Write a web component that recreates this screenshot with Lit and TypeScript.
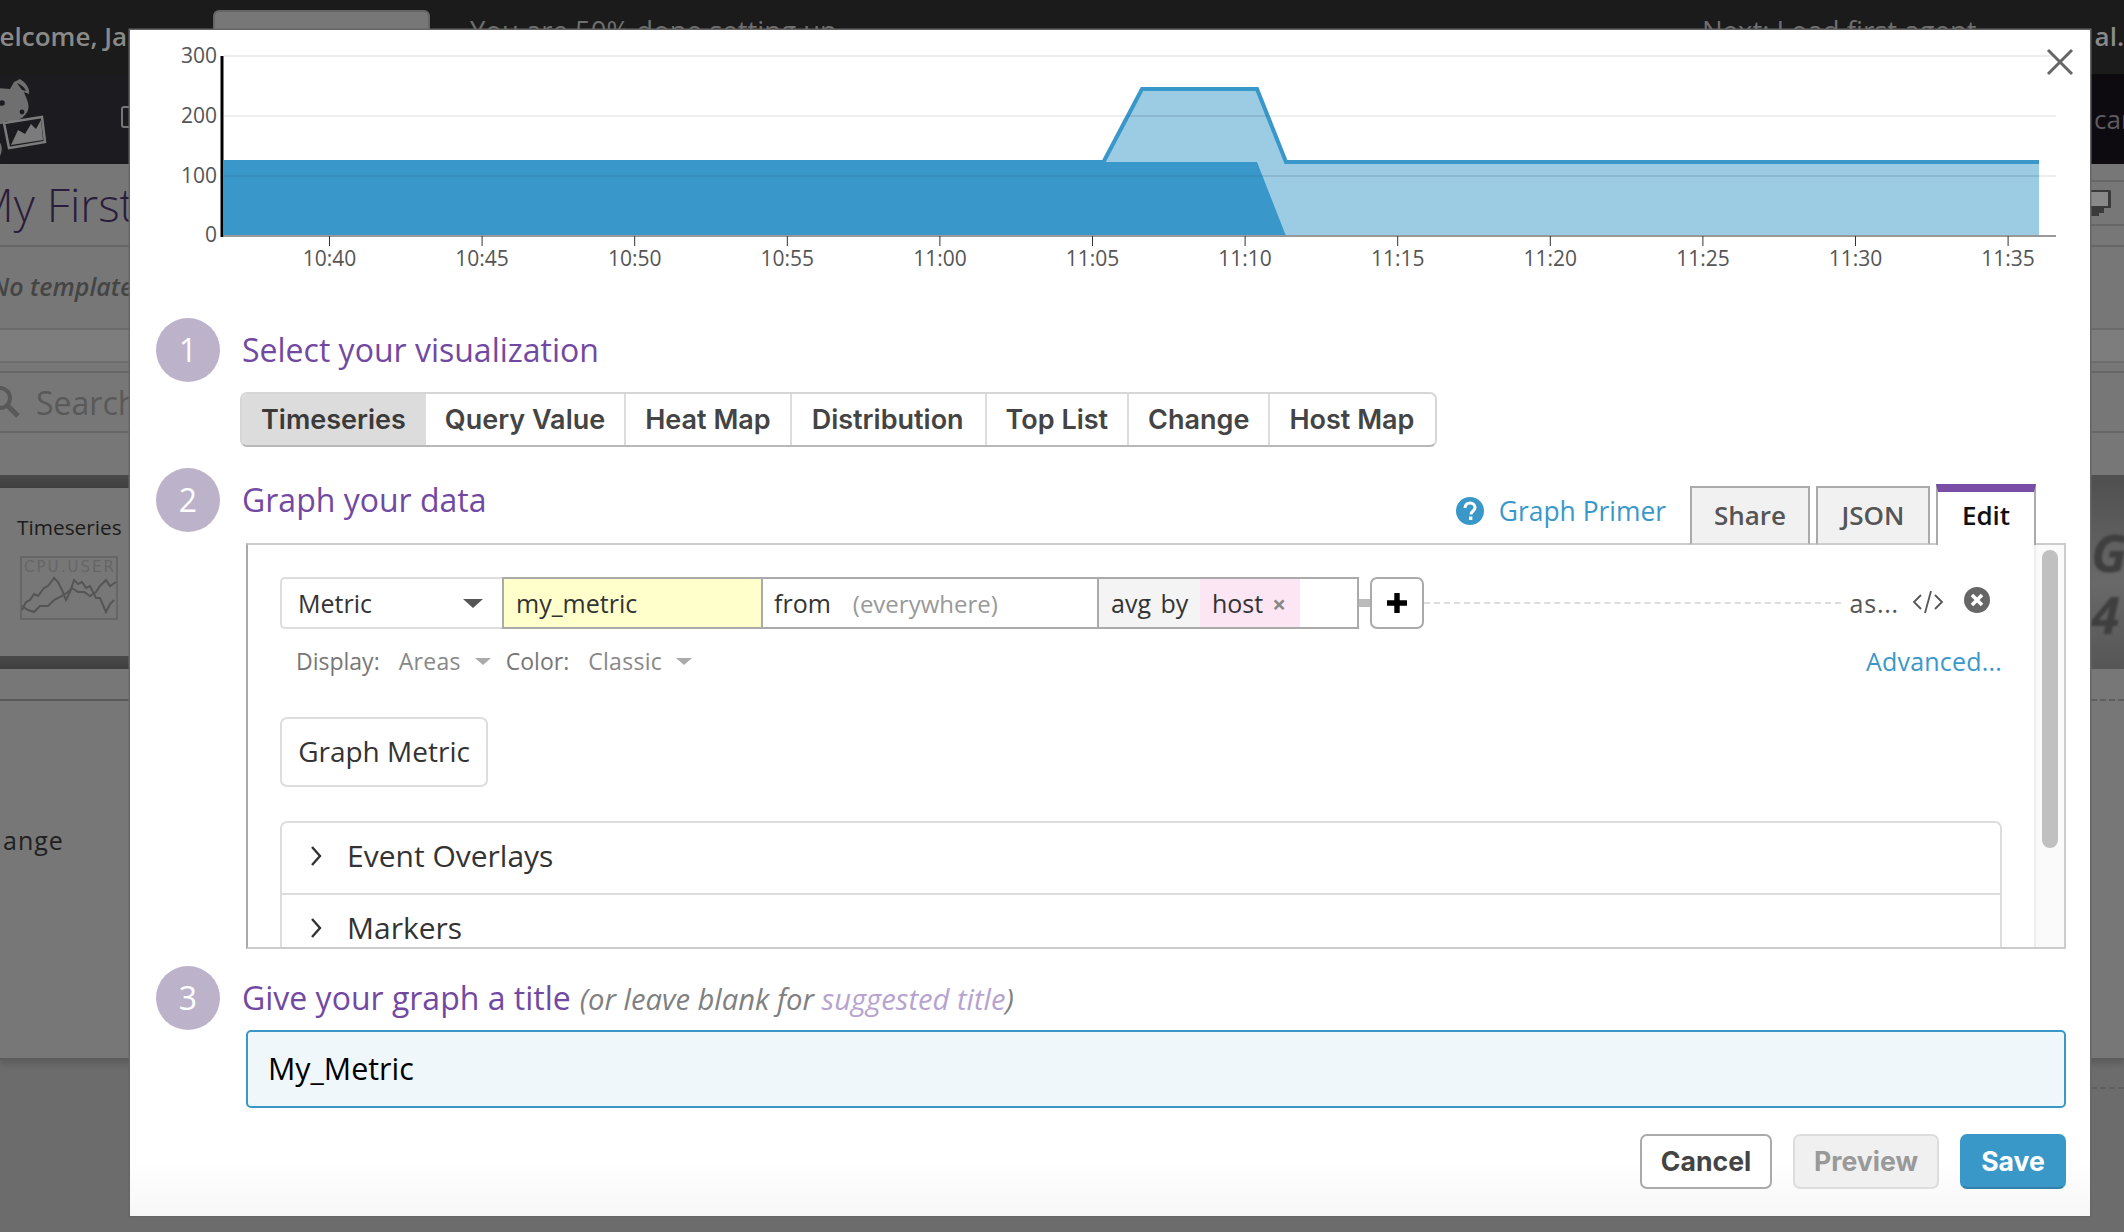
import { LitElement, html, css, svg } from "lit";
import { customElement } from "lit/decorators.js";

const TICKS = ["10:40", "10:45", "10:50", "10:55", "11:00", "11:05", "11:10", "11:15", "11:20", "11:25", "11:30", "11:35"];
const VIZ = ["Timeseries", "Query Value", "Heat Map", "Distribution", "Top List", "Change", "Host Map"];

@customElement("app-root")
export class AppRoot extends LitElement {
  static styles = css`
    :host { display: block; font-family: "Open Sans", "Liberation Sans", sans-serif; }
    * { box-sizing: border-box; }
    .page { position: relative; height: 1232px; overflow: hidden; background: #6c6c6c; color: #333; }

    /* dimmed page behind the dialog */
    .topbar { height: 74px; background: #1b1b1b; color: #8a8a8a; display: flex; font-size: 26px; font-weight: 600; }
    .welcome { margin: 18px 0 0 -25px; width: 238px; white-space: nowrap; }
    .started { margin-top: 10px; width: 217px; height: 40px; background: #777; border: 2px solid #666; border-radius: 6px; }
    .done { margin: 12px 0 0 40px; font-weight: 400; color: #6f6f6f; font-size: 27.5px; white-space: nowrap; }
    .next { margin: 12px 0 0 865px; font-weight: 400; color: #6f6f6f; font-size: 27.5px; white-space: nowrap; width: 20px; }
    .tail { margin: 18px 0 0 auto; }
    .nav { height: 90px; background: #1c1b20; display: flex; align-items: center; justify-content: space-between; }
    .nav svg { display: block; }
    .nav-right { width: 33px; height: 90px; background: #0d0b10; color: #5f5a60; font-size: 26px; line-height: 90px; padding-left: 3px; white-space: nowrap; overflow: hidden; }
    .nav-left { display: flex; align-items: flex-start; gap: 73px; }
    .nav-tile { margin-top: 32px; width: 12px; height: 22px; border: 2px solid #777; border-radius: 3px; }
    .content { height: 896px; background: #777; border-bottom: 2px solid #5c5c5c; box-shadow: 0 4px 6px rgba(0,0,0,.15); }
    .title { height: 83px; border-bottom: 2px solid #666; display: flex; justify-content: space-between; align-items: flex-end; overflow: hidden; }
    .title h1 { margin: 0 0 10px -26px; font-size: 46px; line-height: 62px; font-weight: 300; color: #2a1d3c; white-space: nowrap; }
    .title-side { width: 33px; height: 46px; margin-bottom: 19px; border-top: 2px solid #666; border-bottom: 2px solid #666; display: flex; align-items: center; }
    .tvars { height: 81px; padding-top: 22px; font-size: 25px; font-style: italic; font-weight: 600; color: #454545; margin-left: -9px; white-space: nowrap; }
    .strip { height: 33px; background: #7d7d7d; border-top: 2px solid #6a6a6a; }
    .searchwrap { height: 114px; padding-top: 8px; border-top: 2px solid #6c6c6c; }
    .search { height: 62px; display: flex; align-items: center; gap: 14px; border-top: 2px solid #666; border-bottom: 2px solid #666; color: #595959; font-size: 32px; }
    .search svg { margin-left: -14px; }
    .band { height: 13px; background: linear-gradient(#4a4a4a, #3f3f3f); }
    .panels { display: flex; height: 194px; }
    .panels-left { flex: 1; }
    .panels-main { height: 168px; padding: 26px 0 0 17px; }
    .panels-main .label { font-size: 20.8px; color: #1c1c1c; line-height: 26px; }
    .panels-main svg { display: block; margin: 16px 0 0 3px; }
    .bignum { width: 33px; background: linear-gradient(#4f4f4f, #696969 55%, #565656); overflow: hidden; padding-top: 46px; }
    .bignum span { display: block; color: #3f3f3f; font-size: 52px; font-weight: 700; line-height: 62px; font-style: italic; filter: blur(1px); }
    .lower { height: 32px; display: flex; }
    .lower div { flex: 1; border-bottom: 2px solid #5a5a5a; }
    .lower .dashes, .below .dashes { flex: none; width: 33px; height: 32px; border-bottom: 2px dashed #5f5f5f; background: #777; }
    .ange { margin: 123px 0 0 3px; font-size: 25px; letter-spacing: 1px; color: #202020; line-height: 32px; }
    .below { display: flex; justify-content: flex-end; margin-top: -3px; }
    .below .dashes { background: none; }

    /* dialog */
    .modal { position: absolute; left: 130px; top: 30px; width: 1960px; height: 1186px; background: linear-gradient(#fff 1130px, #f7f7f7); box-shadow: 0 0 0 1.5px #666; }
    .chart { display: block; width: 1960px; height: 288px; }
    .chart text { font-family: "Open Sans", sans-serif; font-size: 21px; fill: #555; }
    .close { position: absolute; right: 16px; top: 18px; }
    .body { padding: 0 24px 0 26px; }
    .step { display: flex; gap: 22px; height: 64px; }
    .num { flex: none; width: 64px; height: 64px; border-radius: 50%; background: #bcb2ca; color: #fff; font-size: 32px; line-height: 64px; text-align: center; }
    h2 { margin: 0; font-size: 32px; line-height: 64px; font-weight: 400; color: #7249a2; white-space: nowrap; }
    .note { font-size: 29.2px; font-style: italic; font-weight: 500; color: #808080; margin-left: 9px; }
    .note em { color: #b6a3d0; }

    .viz { display: flex; width: fit-content; margin: 10px 0 0 84px; height: 55px; border: 2px solid #d6d6d6; border-bottom-color: #b8b8b8; border-radius: 7px; overflow: hidden; }
    .viz div { padding: 0 19px; border-left: 2px solid #ddd; font: 600 27px/51px Inter, sans-serif; color: #444; white-space: nowrap; }
    .viz div:first-child { border-left: 0; padding-right: 18px; background: #dcdcdc; color: #3a3a3a; }
    .viz div:nth-child(4) { padding: 0 21px 0 20px; }
    .viz div:last-child { padding-right: 21px; }

    .step.two { margin-top: 21px; height: 75px; }
    .right { margin: 0 30px -2px auto; align-self: flex-end; display: flex; align-items: flex-end; position: relative; z-index: 1; }
    .primer { display: flex; align-items: center; gap: 15px; font-size: 26.4px; color: #3a98c9; margin: 0 24px 16px 0; white-space: nowrap; }
    .tab { height: 59px; margin-right: 6px; background: #f1f1f1; border: 2px solid #aaa; border-bottom: 2px solid #ccc; font: 600 26px/54px "Open Sans", sans-serif; color: #555; text-align: center; }
    .tab.share { width: 120px; }
    .tab.json { width: 114px; }
    .tab.edit { width: 100px; height: 61px; margin: 0; background: #fff; border-top: 8px solid #7a4ea6; border-bottom: 0; color: #111; line-height: 46px; }

    .panel { margin-left: 90px; height: 406px; border: 2px solid #ccc; border-left-color: #aaa; display: flex; overflow: hidden; }
    .inner { flex: 1; min-width: 0; padding: 32px 32px 0 32px; overflow: hidden; }
    .track { width: 30px; flex: none; background: #fafafa; border-left: 2px solid #eee; padding: 5px 0 0 6px; }
    .thumb { width: 16px; height: 298px; border-radius: 8px; background: #c0c0c0; }

    .query { display: flex; align-items: stretch; height: 52px; font-size: 25px; color: #333; }
    .select { width: 222px; border: 2px solid #ddd; border-right: 0; border-radius: 5px 0 0 5px; display: flex; align-items: center; justify-content: space-between; padding: 0 19px 0 16px; }
    .caret { width: 0; height: 0; border: 10px solid transparent; border-top: 9px solid #555; border-bottom: 0; }
    .box { width: 857px; flex: none; border: 2px solid #aaa; display: flex; }
    .box > div { display: flex; align-items: center; white-space: nowrap; }
    .metric { width: 259px; background: #ffc; padding-left: 12px; border-right: 2px solid #aaa; }
    .from { width: 336px; padding-left: 11px; gap: 22px; border-right: 2px solid #aaa; }
    .from span { color: #999; font-size: 24px; }
    .avg { width: 101px; padding-left: 12px; background: #f4f4f4; word-spacing: 3px; }
    .host { width: 100px; padding-left: 12px; gap: 9px; background: #fde6f3; }
    .host span { color: #888; font-weight: 700; font-size: 24px; }
    .link { width: 11px; height: 8px; align-self: center; background: #bbb; }
    .plus { width: 54px; flex: none; border: 2px solid #aaa; border-radius: 7px; display: flex; align-items: center; justify-content: center; }
    .dash { flex: 1; align-self: center; margin: 0 8px 0 0; border-top: 2px dashed #ddd; }
    .as { display: flex; align-items: center; gap: 13px; padding-right: 12px; color: #555; letter-spacing: .8px; white-space: nowrap; }
    .as svg { margin-bottom: 3px; }
    .as svg:last-child { margin: 0 0 6px 7px; }

    .display { display: flex; height: 32px; margin-top: 16px; align-items: center; font-size: 23px; color: #777; padding-left: 16px; white-space: nowrap; }
    .display .val { color: #888; margin-left: 19px; letter-spacing: .3px; }
    .display .caret { border-width: 8px; border-top: 7px solid #aaa; border-bottom: 0; margin: 0 15px 0 14px; }
    .adv { margin-left: auto; color: #3a98c9; font-size: 25px; letter-spacing: .2px; }

    .gm { margin-top: 40px; width: 208px; height: 70px; border: 2px solid #ddd; border-radius: 7px; font-size: 28px; line-height: 64px; text-align: center; color: #333; }
    .acc { margin-top: 34px; border: 2px solid #ddd; border-bottom: 0; border-radius: 7px 7px 0 0; }
    .acc-row { height: 72px; display: flex; align-items: center; gap: 25px; padding: 0 0 5px 28px; font-size: 30px; color: #333; border-bottom: 2px solid #ddd; }

    .step.three { margin-top: 17px; }
    .input { margin-left: 90px; height: 78px; background: #eff7fb; border: 2px solid #3a98c9; border-radius: 5px; padding-left: 20px; font-size: 30.4px; line-height: 74px; color: #000; }
    .actions { display: flex; justify-content: flex-end; gap: 21px; margin-top: 26px; }
    .btn { height: 55px; border-radius: 7px; border: 2px solid #aaa; background: #fff; font: 700 26.6px/50px Inter, sans-serif; color: #444; text-align: center; }
    .btn.cancel { width: 132px; }
    .btn.preview { width: 146px; background: #f0f0f0; border-color: #ddd; color: #999; }
    .btn.save { width: 106px; background: #3a98c9; border-color: #3a98c9; border-bottom-color: #2f7fa9; color: #fff; }
  `;

  private renderChart() {
    return html`<svg class="chart" viewBox="130 30 1960 288">
      ${[56, 116, 176].map((y) => svg`<line x1="224" x2="2056" y1=${y} y2=${y} stroke="#eee" stroke-width="2"></line>`)}
      ${[[300, 63], [200, 123], [100, 183], [0, 242]].map(([v, y]) => svg`<text x="217" y=${y} text-anchor="end">${v}</text>`)}
      <polygon points="1104,162 1142,90 1257,90 1286,164 2039,164 2039,236 1104,236" fill="#3997ca" fill-opacity=".5"></polygon>
      <polygon points="224,160 1104,160 1106,162 1257,162 1286,236 224,236" fill="#3997ca"></polygon>
      <polyline points="1104,161 1142,89 1257,89 1286,162 2039,162" fill="none" stroke="#3997ca" stroke-width="4"></polyline>
      <line x1="224" x2="2039" y1="176" y2="176" stroke="#000" stroke-opacity=".06" stroke-width="2"></line>
      <line x1="1127" x2="1268" y1="116" y2="116" stroke="#000" stroke-opacity=".06" stroke-width="2"></line>
      <line x1="224" x2="2056" y1="236" y2="236" stroke="#999" stroke-width="2"></line>
      <line x1="222" x2="222" y1="56" y2="237" stroke="#000" stroke-width="3"></line>
      ${TICKS.map((t, i) => {
        const x = 329.5 + i * 152.6;
        return svg`<line x1=${x} x2=${x} y1="236" y2="246" stroke="#333" stroke-width="1"></line>
          <text x=${x} y="266" text-anchor="middle">${t}</text>`;
      })}
    </svg>`;
  }

  private renderBackdrop() {
    return html`
      <div class="topbar">
        <div class="welcome">Welcome, Jane</div>
        <div class="started"></div>
        <div class="done">You are 50% done setting up</div>
        <div class="next">Next: Load first agent</div>
        <div class="tail">al.</div>
      </div>
      <div class="nav">
        <div class="nav-left">
          <svg width="48" height="90" viewBox="0 0 48 90">
            <path d="M-4 14 L10 15 L14 8 L20 5 C26 9 30 14 29 20 L24 18 C26 24 30 30 28 36 C26 42 20 46 14 47 L6 47 L2 50 L-4 50 Z" fill="#6f6f6f"></path>
            <path d="M17 9 C22 11 25 14 26 17 L22 16 Z" fill="#1c1b20"></path>
            <circle cx="2" cy="29" r="2.8" fill="#1c1b20"></circle><circle cx="22" cy="38" r="2.4" fill="#1c1b20"></circle>
            <path d="M-2 66 C2 70 3 76 0 82 L-2 82 Z" fill="#6f6f6f"></path>
            <path d="M4 49 L42 43 L45 68 L9 74 Z" fill="#1c1b20" stroke="#7b7b7b" stroke-width="2.5"></path>
            <path d="M11 71 L18 56 L25 60 L31 50 L36 55 L41 46 L43 66 Z" fill="#7b7b7b"></path>
          </svg>
          <div class="nav-tile"></div>
        </div>
        <div class="nav-right">car</div>
      </div>
      <div class="content">
        <div class="title">
          <h1>My First Dashboard</h1>
          <div class="title-side">
            <svg width="20" height="28" viewBox="0 0 20 28"><path d="M0 1 H19 Q20 1 20 3 V19 H13 V24 H8 V27 H0 Z" fill="#3a3a3a"></path><rect x="0" y="3" width="17" height="14" fill="#8a8a8a"></rect></svg>
          </div>
        </div>
        <div class="tvars">No template variables</div>
        <div class="strip"></div>
        <div class="searchwrap">
          <div class="search">
            <svg width="36" height="36" viewBox="0 0 36 36"><circle cx="14" cy="14" r="10" fill="none" stroke="#595959" stroke-width="4"></circle><line x1="21" y1="21" x2="32" y2="32" stroke="#595959" stroke-width="5"></line></svg>
            Search
          </div>
        </div>
        <div class="panels">
          <div class="panels-left">
            <div class="band"></div>
            <div class="panels-main">
              <div class="label">Timeseries</div>
              <svg width="98" height="64" viewBox="0 0 98 64">
                <rect x="1" y="1" width="96" height="62" fill="none" stroke="#666" stroke-width="2"></rect>
                <text x="4" y="16" font-size="15" font-family="DejaVu Sans" fill="#666" textLength="90">CPU.USER</text>
                <polyline points="2,54 6,46 10,44 14,38 18,40 24,32 28,30 34,22 38,26 42,34 46,44 50,36 54,24 58,28 62,26 66,32 70,30 76,42 80,42 86,56 90,48 94,44" fill="none" stroke="#555" stroke-width="2"></polyline>
                <polyline points="2,50 8,54 14,56 20,50 28,50 34,44 42,40 48,36 52,32 58,36 64,36 70,40 76,36 80,30 86,24 90,30 96,26" fill="none" stroke="#555" stroke-width="2"></polyline>
              </svg>
            </div>
            <div class="band"></div>
          </div>
          <div class="bignum"><span>G</span><span>4</span></div>
        </div>
        <div class="lower"><div></div><div class="dashes"></div></div>
        <div class="ange">ange</div>
      </div>
      <div class="below"><div class="dashes"></div></div>`;
  }

  render() {
    return html`<div class="page">
      ${this.renderBackdrop()}
      <div class="modal">
        ${this.renderChart()}
        <svg class="close" width="28" height="28" viewBox="0 0 28 28"><path d="M2 2 L26 26 M26 2 L2 26" stroke="#666" stroke-width="3"></path></svg>
        <div class="body">
          <div class="step"><div class="num">1</div><h2>Select your visualization</h2></div>
          <div class="viz">${VIZ.map((v) => html`<div>${v}</div>`)}</div>

          <div class="step two">
            <div class="num">2</div><h2>Graph your data</h2>
            <div class="right">
              <div class="primer">
                <svg width="28" height="28" viewBox="0 0 28 28"><circle cx="14" cy="14" r="14" fill="#3a98c9"></circle><path d="M9 11 C9 7.5 11.5 6 14 6 C17 6 19 8 19 10.5 C19 14 15 14 15 17.5" fill="none" stroke="#fff" stroke-width="3"></path><rect x="13" y="19.5" width="3.4" height="3.4" fill="#fff"></rect></svg>
                Graph Primer
              </div>
              <div class="tab share">Share</div>
              <div class="tab json">JSON</div>
              <div class="tab edit">Edit</div>
            </div>
          </div>

          <div class="panel">
            <div class="inner">
              <div class="query">
                <div class="select">Metric<span class="caret"></span></div>
                <div class="box">
                  <div class="metric">my_metric</div>
                  <div class="from">from <span>(everywhere)</span></div>
                  <div class="avg">avg by</div>
                  <div class="host">host <span>×</span></div>
                </div>
                <div class="link"></div>
                <div class="plus"><svg width="24" height="24" viewBox="0 0 24 24"><path d="M12 2 V22 M2 12 H22" stroke="#000" stroke-width="5.4"></path></svg></div>
                <div class="dash"></div>
                <div class="as">
                  as...
                  <svg width="32" height="24" viewBox="0 0 32 24"><path d="M9 5 L2 12 L9 19 M23 5 L30 12 L23 19 M19 1 L13 23" fill="none" stroke="#555" stroke-width="1.8"></path></svg>
                  <svg width="26" height="26" viewBox="0 0 26 26"><circle cx="13" cy="13" r="13" fill="#666"></circle><path d="M8 8 L18 18 M18 8 L8 18" stroke="#fff" stroke-width="3.6"></path></svg>
                </div>
              </div>
              <div class="display">
                Display:<span class="val">Areas</span><span class="caret"></span>Color:<span class="val">Classic</span><span class="caret"></span>
                <span class="adv">Advanced...</span>
              </div>
              <div class="gm">Graph Metric</div>
              <div class="acc">
                ${["Event Overlays", "Markers"].map(
                  (t) => html`<div class="acc-row"><svg width="12" height="22" viewBox="0 0 12 22"><path d="M2 2 L10 11 L2 20" fill="none" stroke="#333" stroke-width="2.4"></path></svg>${t}</div>`
                )}
              </div>
            </div>
            <div class="track"><div class="thumb"></div></div>
          </div>

          <div class="step three">
            <div class="num">3</div>
            <h2>Give your graph a title<span class="note">(or leave blank for <em>suggested title</em>)</span></h2>
          </div>
          <div class="input">My_Metric</div>
          <div class="actions">
            <div class="btn cancel">Cancel</div>
            <div class="btn preview">Preview</div>
            <div class="btn save">Save</div>
          </div>
        </div>
      </div>
    </div>`;
  }
}
